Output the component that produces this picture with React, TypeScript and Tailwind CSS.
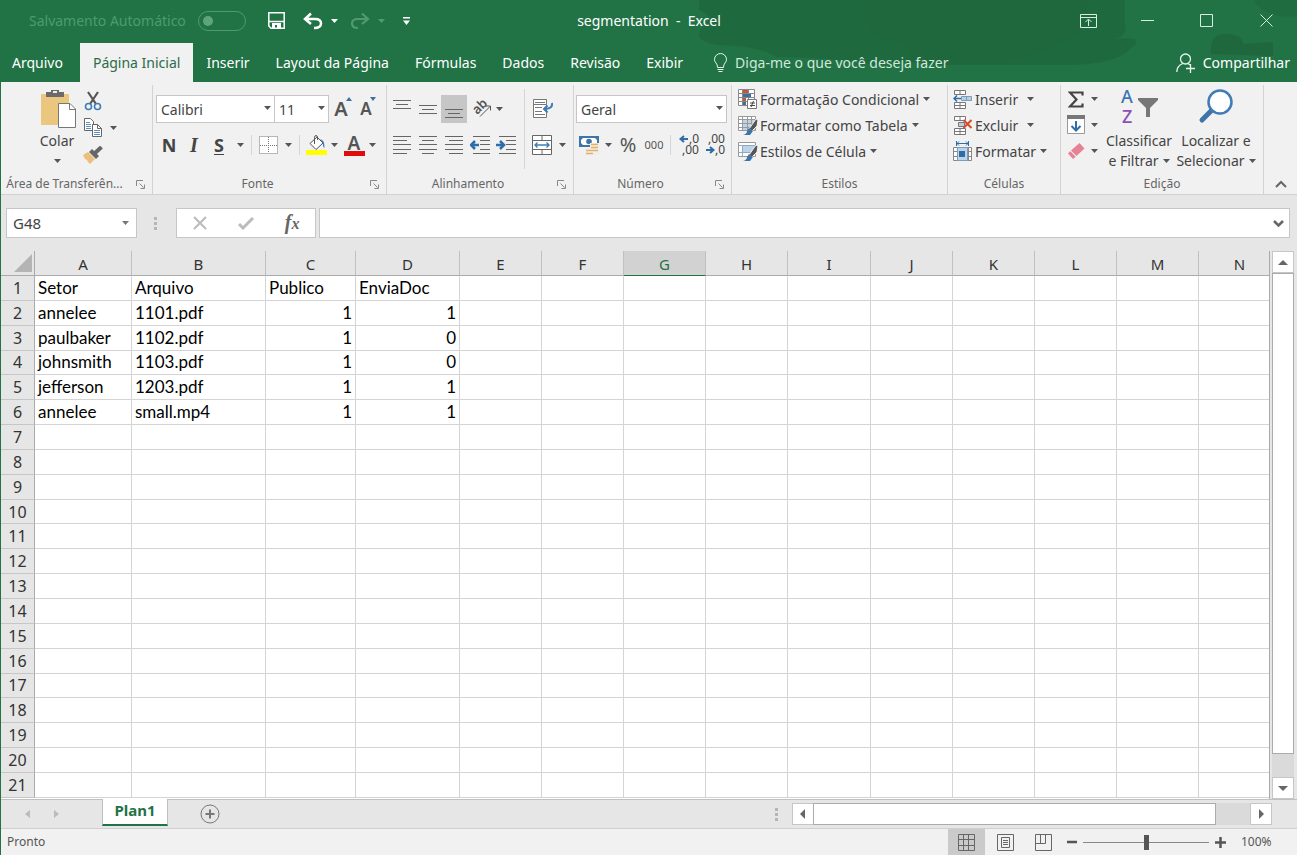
import React, { useState } from "react";
import clsx from "clsx";

interface IconProps {
  className?: string;
}

const COLUMNS = [
  { name: "A", width: 97 },
  { name: "B", width: 134 },
  { name: "C", width: 90 },
  { name: "D", width: 104 },
  { name: "E", width: 82 },
  { name: "F", width: 82 },
  { name: "G", width: 82 },
  { name: "H", width: 82 },
  { name: "I", width: 83 },
  { name: "J", width: 82 },
  { name: "K", width: 82 },
  { name: "L", width: 82 },
  { name: "M", width: 82 },
  { name: "N", width: 82 },
];

const DATA: (string | number)[][] = [
  ["Setor", "Arquivo", "Publico", "EnviaDoc"],
  ["annelee", "1101.pdf", 1, 1],
  ["paulbaker", "1102.pdf", 1, 0],
  ["johnsmith", "1103.pdf", 1, 0],
  ["jefferson", "1203.pdf", 1, 1],
  ["annelee", "small.mp4", 1, 1],
];

const ROW_COUNT = 21;
const ACTIVE_COLUMN = "G";

const TABS = [
  "Arquivo",
  "Página Inicial",
  "Inserir",
  "Layout da Página",
  "Fórmulas",
  "Dados",
  "Revisão",
  "Exibir",
];

/* ---------- small shared pieces ---------- */

const Caret = ({ className = "text-[#555]" }: IconProps) => (
  <svg viewBox="0 0 7 4" className={clsx("h-1 w-[7px] shrink-0", className)} fill="currentColor">
    <path d="M0 0h7L3.500 4z" />
  </svg>
);

const CaretButton = ({ label, className }: { label: string; className?: string }) => (
  <button
    aria-label={label}
    className={clsx("flex h-6 w-4 shrink-0 items-center justify-center", className)}
  >
    <Caret />
  </button>
);

const Divider = ({ className }: IconProps) => (
  <div className={clsx("w-px shrink-0 bg-[#d5d5d5]", className)} />
);

interface IconButtonProps {
  label: string;
  className?: string;
  children: React.ReactNode;
}

const IconButton = ({ label, className = "h-7 w-6", children }: IconButtonProps) => (
  <button
    aria-label={label}
    className={clsx("flex shrink-0 items-center justify-center", className)}
  >
    {children}
  </button>
);

interface GroupProps {
  title: string;
  launcher?: boolean;
  className: string;
  children: React.ReactNode;
}

const Group = ({ title, launcher, className, children }: GroupProps) => (
  <section
    aria-label={title}
    className={clsx("relative flex shrink-0 flex-col border-r border-[#d2d2d2]", className)}
  >
    <div className="flex h-[89px]">{children}</div>
    <div className="flex h-5 items-center text-[12px] text-[#666]">
      <span className="flex-1 truncate text-center">{title}</span>
      {launcher && (
        <button aria-label={`Opções de ${title}`} className="flex w-6 justify-center">
          <svg viewBox="0 0 9 9" className="size-[9px]" fill="none" stroke="#888">
            <path d="M.5 6V.5H7M3.500 3.500l4 4M8.500 4.500v4h-4" />
          </svg>
        </button>
      )}
    </div>
  </section>
);

interface PickerProps {
  label: string;
  value: string;
  className: string;
}

const Picker = ({ label, value, className }: PickerProps) => (
  <div className={clsx("relative h-7 shrink-0", className)}>
    <select
      aria-label={label}
      defaultValue={value}
      className="size-full appearance-none border border-[#c6c6c6] bg-white pl-1 text-[14px] text-[#444] outline-none"
    >
      <option>{value}</option>
    </select>
    <Caret className="pointer-events-none absolute top-[11px] right-1 text-[#555]" />
  </div>
);

/* ---------- ribbon icons ---------- */

const PasteIcon = () => (
  <svg viewBox="0 0 36 40" className="h-10 w-9">
    <path fill="#ebc67f" d="M0 5h28v31H0z" />
    <path fill="#6b6b6b" d="M5 3h5V1h8v2h5v5H5z" />
    <path fill="#efefef" d="M12 2h4v2h-4z" />
    <path fill="#fff" stroke="#777" d="M17.500 14.500H29l5.500 5.500v18.500h-17z" />
    <path fill="none" stroke="#777" d="M28.500 14.500v6h6" />
  </svg>
);

const CutIcon = () => (
  <svg viewBox="0 0 18 20" className="h-5 w-[18px]" fill="none">
    <path stroke="#555" strokeWidth="2.200" d="M4 1l8 12M14 1L6 13" />
    <circle cx="4.500" cy="15.500" r="3" stroke="#3f7cb5" strokeWidth="1.600" />
    <circle cx="13.500" cy="15.500" r="3" stroke="#3f7cb5" strokeWidth="1.600" />
  </svg>
);

const CopyIcon = () => (
  <svg viewBox="0 0 18 19" className="h-[19px] w-[18px]" fill="#fff" stroke="#666">
    <path d="M.5.5h6l3 3v9h-9z" />
    <path stroke="#5b8fbf" d="M2 4.500h4M2 6.500h5M2 8.500h5M2 10.500h5" />
    <path d="M8.500 6.500h5l4 4v8h-9z" />
    <path d="M13.500 6.500v4h4" fill="none" />
    <path stroke="#5b8fbf" d="M10 12.500h6M10 14.500h6M10 16.500h6" />
  </svg>
);

const BrushIcon = () => (
  <svg viewBox="0 0 20 18" className="h-[18px] w-5">
    <path fill="#ecbf7c" d="M0 9l5-3 7 7-5 5-2-2-1-2-2-1z" />
    <path fill="#666" d="M6 6l3-3 7 7-3 3z" />
    <path stroke="#666" strokeWidth="4" d="M12 7l6.500-6" />
  </svg>
);

const GrowFontIcon = ({ down }: { down?: boolean }) => (
  <span className="relative flex items-end text-[#555]">
    <span className={clsx("leading-6 font-semibold", down ? "text-[17px]" : "text-[20px]")}>A</span>
    <svg viewBox="0 0 6 4" className="absolute top-0 -right-1 h-1 w-1.5" fill="#3f6f9f">
      <path d={down ? "M0 0h6L3 4z" : "M0 4h6L3 0z"} />
    </svg>
  </span>
);

const BordersIcon = () => (
  <svg viewBox="0 0 19 19" className="size-[19px]" fill="none" stroke="#777">
    <path fill="#fff" strokeDasharray="1 1" d="M.5.5h18v17H.5z" />
    <path strokeDasharray="1 1" d="M9.500 1v16M1 9.500h17" />
  </svg>
);

const FillIcon = () => (
  <svg viewBox="0 0 21 20" className="h-5 w-[21px]">
    <path fill="#ff0" d="M0 15h21v5H0z" />
    <path fill="#fff" stroke="#555" d="M4 8.500L11 2l6 6-7 6.500z" />
    <path fill="none" stroke="#555" d="M8.500 9V2.500q0-2 1.500-2t1.500 2V5" />
    <path fill="#3f7cb5" d="M14 4q5 1 4.500 9-2-1-1.500-5z" />
  </svg>
);

const FontColorIcon = () => (
  <span className="flex flex-col items-center">
    <span className="text-[19px] leading-4 font-semibold text-[#555]">A</span>
    <span className="h-[5px] w-[21px] bg-[#e00b0b]" />
  </span>
);

// one path per alignment, all drawn on the same 18x20 box
const LINES = {
  top: "M0 1.500h18M3 5.500h12M0 9.500h18",
  middle: "M0 6.500h18M3 10.500h12M0 14.500h18",
  bottom: "M0 10.500h18M3 14.500h12M0 18.500h18",
  left: "M0 1.500h18M0 5.500h14M0 9.500h18M0 14.500h18M0 18.500h14",
  center: "M0 1.500h18M3 5.500h12M0 9.500h18M0 14.500h18M3 18.500h12",
  right: "M0 1.500h18M4 5.500h14M0 9.500h18M0 14.500h18M4 18.500h14",
};

const LinesIcon = ({ kind }: { kind: keyof typeof LINES }) => (
  <svg viewBox="0 0 18 20" className="h-5 w-[18px]" fill="none" stroke="#666">
    <path d={LINES[kind]} />
  </svg>
);

const IndentIcon = ({ increase }: { increase?: boolean }) => (
  <svg viewBox="0 0 20 20" className="size-5" fill="none">
    <path stroke="#666" d="M3 1.500h17M10 5.500h10M10 9.500h10M10 14.500h10M3 18.500h17" />
    <path
      stroke="#2f6da8"
      strokeWidth="2.500"
      d={increase ? "M0 10h7M4 6l4 4-4 4" : "M9 10H2M5 6l-4 4 4 4"}
    />
  </svg>
);

const OrientationIcon = () => (
  <svg viewBox="0 0 20 20" className="size-5 overflow-visible">
    <text x="0" y="12" fontSize="13" fontWeight="600" fill="#555" transform="rotate(-45 7 9)">
      ab
    </text>
    <path fill="none" stroke="#555" d="M7 17.500L17 7.500M13 7h4.500v4.500" />
  </svg>
);

const WrapIcon = () => (
  <svg viewBox="0 0 21 20" className="h-5 w-[21px]" fill="none">
    <path fill="#fff" stroke="#777" d="M1.500.5h13v5h-13zM1.500 5.500h13v13h-13z" />
    <path stroke="#777" d="M3 3.500h10M3 8.500h7M3 12.500h7M3 15.500h10" />
    <path stroke="#3f7cb5" strokeWidth="2" d="M20 4q1 6-8 6M15.500 6.500L12 10l3.500 3.500" />
  </svg>
);

const MergeIcon = () => (
  <svg viewBox="0 0 21 20" className="h-5 w-[21px]" fill="#fff">
    <path stroke="#666" d="M.5.5h19v19H.5zM.5 5.500h19M.5 14.500h19M10 .5v5M10 14.500v5" />
    <path
      fill="none"
      stroke="#3f7cb5"
      strokeWidth="1.400"
      d="M3 10h14M5.500 7.500L3 10l2.500 2.500M14.500 7.500L17 10l-2.500 2.500"
    />
  </svg>
);

const MoneyIcon = () => (
  <svg viewBox="0 0 21 20" className="h-5 w-[21px]">
    <path fill="#3f74a8" d="M0 1h20v11H0z" />
    <path fill="#fff" d="M4 3h12l2 2v3l-2 2H4L2 8V5z" />
    <circle cx="10" cy="6.500" r="2.800" fill="#3f74a8" />
    <path fill="#efefef" d="M11 8h10v12H6v-7h5z" />
    <path
      stroke="#e5b061"
      strokeWidth="1.600"
      d="M12 9.500h7M12 12.500h7M12 15.500h7M7 15.500h5M7 18.500h7"
    />
  </svg>
);

const DecimalIcon = ({ decrease }: { decrease?: boolean }) => (
  <svg viewBox="0 0 20 22" className="h-[22px] w-5 overflow-visible text-[12px]" fill="#444">
    <text x={decrease ? 2 : 9} y="9">
      {decrease ? ",00" : ",0"}
    </text>
    <text x={decrease ? 9 : 2} y="20">
      {decrease ? ",0" : ",00"}
    </text>
    <path
      fill="none"
      stroke="#2f6da8"
      strokeWidth="2"
      d={decrease ? "M0 16h7M4 13l3.500 3L4 19" : "M8 5H1M4 2L.5 5 4 8"}
    />
  </svg>
);

const ConditionalIcon = () => (
  <svg viewBox="0 0 20 20" className="size-5">
    <path
      fill="#fff"
      stroke="#888"
      d="M.5.5h16v16H.5zM4.500.5v16M10.500.5v16M.5 4.500h16M.5 8.500h16M.5 12.500h16"
    />
    <path fill="#c5533f" d="M5 1h5v3H5zM5 9h3v3H5z" />
    <path fill="#3f6f9f" d="M5 5h8v3H5zM5 13h3v3H5z" />
    <path fill="#fff" stroke="#777" d="M9.500 10.500h9v9h-9z" />
    <path stroke="#444" d="M12 14h5M12 16.500h5M15.500 12l-2.500 6" />
  </svg>
);

const TableBrushIcon = ({ cell }: { cell?: boolean }) => (
  <svg viewBox="0 0 20 20" className="size-5">
    <path fill="#fff" stroke="#999" d="M.5 1.500h17v14H.5z" />
    {cell ? (
      <path
        fill="#bcd3ea"
        stroke="#8fa9c0"
        d="M4.500 4.500h13v7h-13zM.5 4.500h4M.5 11.500h4M4.500 11.500v4"
      />
    ) : (
      <>
        <path fill="#bcd3ea" d="M5 5h12v10H5z" />
        <path
          fill="none"
          stroke="#999"
          d="M.5 4.500h17M.5 8.500h17M.5 12.500h17M4.500 1.500v14M9.500 1.500v14M13.500 1.500v14"
        />
      </>
    )}
    <path stroke="#f1f1f1" fill="#555" d="M18 4l2 1-1 6-5 5-3-2z" />
    <path fill="#3f74a8" d="M11 13l4 3-3 4H5q4-1 4-4z" />
  </svg>
);

const InsertIcon = () => (
  <svg viewBox="0 0 20 19" className="h-[19px] w-5">
    <path
      fill="#fff"
      stroke="#777"
      d="M1.500.5h11v4h-11zM1.500 12.500h11v6h-11zM7 .5v4M7 12.500v6M1.500 15.500h11"
    />
    <path fill="#b9cfe4" stroke="#7d9cb8" d="M8.500 6.500h10v4h-10zM13.500 6.500v4" />
    <path fill="none" stroke="#2f6da8" strokeWidth="1.500" d="M8 8.500H1M4 5.500l-3 3 3 3" />
  </svg>
);

const DeleteIcon = () => (
  <svg viewBox="0 0 20 19" className="h-[19px] w-5">
    <path
      fill="#fff"
      stroke="#777"
      d="M1.500.5h11v4h-11zM1.500 12.500h11v6h-11zM7 .5v4M7 12.500v6M1.500 15.500h11"
    />
    <path fill="#b9cfe4" stroke="#777" d="M5.500 6.500h6v4h-6z" />
    <path fill="none" stroke="#d8492c" strokeWidth="2" d="M10.500 4l8 8M18.500 4l-8 8" />
  </svg>
);

const FormatIcon = () => (
  <svg viewBox="0 0 20 20" className="size-5">
    <path fill="none" stroke="#2f6da8" d="M3.500 0v5M15.500 0v5M4 2.500h11M6 .5l-2 2 2 2M13 .5l2 2-2 2" />
    <path
      fill="#fff"
      stroke="#888"
      d="M.5 6.500h18v13H.5zM.5 10.500h18M.5 15.500h18M4.500 6.500v13M15.500 6.500v13"
    />
    <path fill="#bcd3ea" stroke="#7d9cb8" d="M4.500 6.500h10v13h-10z" />
    <path fill="#2f6da8" d="M6 10h6v6H6z" />
  </svg>
);

const SigmaIcon = () => (
  <svg viewBox="0 0 16 17" className="h-[17px] w-4" fill="none" stroke="#444" strokeWidth="2.200">
    <path d="M14.500 4.500V1.500H2l6.500 7L2 15.500h12.500v-3" />
  </svg>
);

const FillDownIcon = () => (
  <svg viewBox="0 0 18 20" className="h-5 w-[18px]">
    <path fill="#fff" stroke="#999" d="M.5.5h17v18H.5z" />
    <path fill="#777" d="M0 0h18v4H0z" />
    <path fill="none" stroke="#2f6da8" strokeWidth="2" d="M9 6v9M4.500 11L9 15.500l4.500-4.500" />
  </svg>
);

const EraserIcon = () => (
  <svg viewBox="0 0 18 18" className="size-[18px]">
    <path fill="#e58395" d="M12.500 1l5 5.500L9.500 14 4 8.500z" />
    <path fill="#e58395" d="M3.300 9.300l5.400 5.400L6 17 1 11.500z" />
  </svg>
);

const SortFilterIcon = () => (
  <svg viewBox="0 0 37 36" className="h-9 w-[37px] overflow-visible text-[18px] font-medium">
    <text x="0" y="14" fill="#3f74b5">
      A
    </text>
    <text x="1" y="34" fill="#8d4fb5">
      Z
    </text>
    <path fill="#777" d="M17 9h20v2l-8 8v9h-4v-9l-8-8z" />
  </svg>
);

const FindIcon = () => (
  <svg viewBox="0 0 36 36" className="size-9" fill="none">
    <path stroke="#3f74a8" strokeWidth="5" strokeLinecap="round" d="M4 31L13 22" />
    <circle cx="22" cy="13" r="11.500" fill="#fff" stroke="#3f7cb5" strokeWidth="2.500" />
  </svg>
);

/* ---------- title bar and tabs ---------- */

const HeaderPattern = () => (
  <svg
    viewBox="0 0 620 82"
    preserveAspectRatio="xMaxYMin slice"
    className="pointer-events-none absolute top-0 right-0 h-full w-[620px]"
    fill="#1f653c"
  >
    <path
      d="M22 0h426v24q4 14-16 16 40-6 22 8-14 16-60 17H260q-30-8-60 0-50-8-100-8-20-12-60-12-30-6-10-22 5-8-8-13z"
      opacity=".75"
    />
    <path d="M190 0h220v25q-40 30-90 38h-90q10-15-12-22-40-8-28-41z" opacity=".6" />
    <path d="M534 54q-2-20 15-20t17 10l30-2v14z" opacity=".8" />
    <path d="M576 0h44v16q-30 4-44-16z" opacity=".5" />
  </svg>
);

const TitleBar = () => (
  <div className="relative flex h-[41px] items-center text-white">
    <div className="flex flex-1 items-center text-[#4f9a6e]">
      <label className="ml-7 flex items-center gap-3 text-[14px] whitespace-nowrap">
        Salvamento Automático
        <input
          type="checkbox"
          className="relative h-5 w-12 appearance-none rounded-full border border-[#4f9a6e] before:absolute before:top-1 before:left-1 before:size-[10px] before:rounded-full before:bg-[#5fa57c]"
        />
      </label>
      <button aria-label="Salvar" className="ml-[22px] flex">
        <svg viewBox="0 0 17 17" className="size-[17px]" fill="none" stroke="#fff" strokeWidth="1.500">
          <path d="M.8.800h15.400v15.400H3L.8 14z" />
          <path d="M1 9.500h15" />
          <path fill="#fff" stroke="none" d="M4 11h9v6H9v-4H7v4H4z" />
        </svg>
      </button>
      <button aria-label="Desfazer" className="ml-[18px] flex">
        <svg viewBox="0 0 20 18" className="h-[18px] w-5" fill="none" stroke="#fff" strokeWidth="2.500">
          <path d="M2 7h10q6 0 6 4.500T11 16M8 1.500L2 7l6 5" />
        </svg>
      </button>
      <button aria-label="Opções de desfazer" className="ml-2 flex">
        <Caret className="text-white" />
      </button>
      <button aria-label="Refazer" className="ml-3 flex">
        <svg viewBox="0 0 20 18" className="h-[18px] w-5" fill="none" stroke="#4f9a6e" strokeWidth="2.200">
          <path d="M18 7H8q-6 0-6 4.500T8 16M12 1.500L18 7l-6 5" />
        </svg>
      </button>
      <button aria-label="Opções de refazer" className="ml-2 flex">
        <Caret className="text-[#4f9a6e]" />
      </button>
      <button aria-label="Personalizar acesso rápido" className="ml-[18px] flex">
        <svg viewBox="0 0 7 8" className="h-2 w-[7px]" fill="#fff">
          <path d="M0 0h7v1.500H0zM0 3.500h7L3.500 8z" />
        </svg>
      </button>
    </div>
    <h1 className="text-[14px] whitespace-pre">segmentation  -  Excel</h1>
    <div className="flex flex-1 justify-end">
      <button aria-label="Opções de exibição da faixa" className="flex w-[59px] justify-center">
        <svg viewBox="0 0 17 14" className="h-3.5 w-[17px]" fill="none" stroke="#d5f0e0">
          <path d="M.5.5h16v13H.5zM.5 3.500h16M8.500 12V5.500M5.500 8l3-3 3 3" />
        </svg>
      </button>
      <button aria-label="Minimizar" className="flex w-[59px] items-center justify-center">
        <svg viewBox="0 0 13 13" className="size-[13px]" stroke="#d5f0e0">
          <path d="M0 6.500h13" />
        </svg>
      </button>
      <button aria-label="Maximizar" className="flex w-[59px] items-center justify-center">
        <svg viewBox="0 0 13 13" className="size-[13px]" fill="none" stroke="#d5f0e0">
          <path d="M.5.5h12v12H.5z" />
        </svg>
      </button>
      <button aria-label="Fechar" className="flex w-[61px] items-center justify-center">
        <svg viewBox="0 0 13 13" className="size-[13px]" stroke="#d5f0e0">
          <path d="M.5.5l12 12M12.500.5l-12 12" />
        </svg>
      </button>
    </div>
  </div>
);

const RibbonTabs = () => {
  const [active, setActive] = useState("Página Inicial");
  return (
    <nav className="relative mt-0.5 flex h-[39px] items-stretch pr-[7px] text-[14px] whitespace-nowrap text-white">
      {TABS.map((tab) => (
        <button
          key={tab}
          onClick={() => setActive(tab)}
          className={clsx(
            "px-[13px] first:pr-[17px] first:pl-[11px]",
            tab === active && "bg-[#f1f1f1] text-[#2c6b48]",
          )}
        >
          {tab}
        </button>
      ))}
      <button className="ml-[18px] flex items-center gap-2 text-[#cfe8da]">
        <svg viewBox="0 0 13 20" className="h-5 w-[13px]" fill="none" stroke="#e6f5ec">
          <path d="M3.500 14.500q0-3-1.500-4.500T.5 6.500a6 6 0 0112 0q0 2-1.500 3.500t-1.500 4.500zM3.500 16.500h6M4.500 18.500h4" />
        </svg>
        Diga-me o que você deseja fazer
      </button>
      <button className="ml-auto flex items-center gap-2">
        <svg viewBox="0 0 19 20" className="h-5 w-[19px]" fill="none" stroke="#e6f5ec" strokeWidth="1.300">
          <circle cx="9.500" cy="6" r="5" />
          <path d="M.8 19q0-6 6-8.500M12 10.500l2 1.500M10 15.500h9M14.500 11v9" />
        </svg>
        Compartilhar
      </button>
    </nav>
  );
};

/* ---------- ribbon ---------- */

interface MenuButtonProps {
  icon: React.ReactNode;
  text: string;
  className?: string;
}

const MenuButton = ({ icon, text, className }: MenuButtonProps) => (
  <button className="flex h-[26px] items-center gap-0.5 text-[14px] whitespace-nowrap text-[#444]">
    {icon}
    <span className={className}>{text}</span>
    <Caret className="ml-0.5 text-[#555]" />
  </button>
);

const Ribbon = () => (
  <div className="flex h-[113px] shrink-0 border-b border-[#d2d2d2] bg-[#f1f1f1] pt-[3px]">
    <Group title="Área de Transferên..." launcher className="w-[152px]">
      <button className="ml-9 flex w-10 flex-col items-center pt-1 text-[14px] text-[#444]">
        <span className="flex w-10 justify-end">
          <PasteIcon />
        </span>
        <span className="leading-6">Colar</span>
        <Caret className="mt-1.5 text-[#555]" />
      </button>
      <div className="ml-1.5 flex flex-col pt-0.5">
        <IconButton label="Recortar" className="h-[27px] w-5">
          <CutIcon />
        </IconButton>
        <div className="flex items-center">
          <IconButton label="Copiar" className="h-[27px] w-5">
            <CopyIcon />
          </IconButton>
          <CaretButton label="Opções de cópia" className="ml-0.5" />
        </div>
        <IconButton label="Pincel de formatação" className="h-[27px] w-5">
          <BrushIcon />
        </IconButton>
      </div>
    </Group>

    <Group title="Fonte" launcher className="w-[234px]">
      <div className="flex flex-col gap-2 pt-2.5 pl-[3px]">
        <div className="flex">
          <Picker label="Fonte" value="Calibri" className="w-[119px]" />
          <Picker label="Tamanho da fonte" value="11" className="-ml-px w-[55px]" />
          <IconButton label="Aumentar fonte" className="h-7 w-6">
            <GrowFontIcon />
          </IconButton>
          <IconButton label="Diminuir fonte" className="h-7 w-[26px]">
            <GrowFontIcon down />
          </IconButton>
        </div>
        <div className="flex items-center text-[18px] text-[#444]">
          <IconButton label="Negrito" className="h-7 w-[26px] font-bold">
            N
          </IconButton>
          <IconButton label="Itálico" className="h-7 w-6 font-['Liberation_Serif'] text-[20px] font-bold italic">
            I
          </IconButton>
          <IconButton label="Sublinhado" className="h-7 w-[26px] font-bold underline underline-offset-2">
            S
          </IconButton>
          <CaretButton label="Opções de sublinhado" />
          <Divider className="ml-[3px] h-5" />
          <IconButton label="Bordas" className="ml-1 h-7 w-6">
            <BordersIcon />
          </IconButton>
          <CaretButton label="Opções de bordas" />
          <Divider className="ml-[3px] h-5" />
          <IconButton label="Cor de preenchimento" className="ml-1 h-7 w-6">
            <FillIcon />
          </IconButton>
          <CaretButton label="Opções de preenchimento" className="-ml-0.5" />
          <IconButton label="Cor da fonte" className="h-7 w-6">
            <FontColorIcon />
          </IconButton>
          <CaretButton label="Opções de cor da fonte" className="-ml-0.5" />
        </div>
      </div>
    </Group>

    <Group title="Alinhamento" launcher className="w-[187px]">
      <div className="flex w-[137px] flex-col gap-2 pt-2.5 pl-0.5">
        <div className="flex items-center">
          <IconButton label="Alinhar em cima" className="h-7 w-[26px]">
            <LinesIcon kind="top" />
          </IconButton>
          <IconButton label="Alinhar no meio" className="h-7 w-[26px]">
            <LinesIcon kind="middle" />
          </IconButton>
          <IconButton label="Alinhar embaixo" className="h-7 w-[26px] bg-[#c6c6c6]">
            <LinesIcon kind="bottom" />
          </IconButton>
          <IconButton label="Orientação" className="ml-1 h-7 w-6">
            <OrientationIcon />
          </IconButton>
          <CaretButton label="Opções de orientação" className="-ml-1" />
        </div>
        <div className="flex items-center">
          <IconButton label="Alinhar à esquerda" className="h-7 w-[26px]">
            <LinesIcon kind="left" />
          </IconButton>
          <IconButton label="Centralizar" className="h-7 w-[26px]">
            <LinesIcon kind="center" />
          </IconButton>
          <IconButton label="Alinhar à direita" className="h-7 w-[26px]">
            <LinesIcon kind="right" />
          </IconButton>
          <IconButton label="Diminuir recuo" className="h-7 w-[26px]">
            <IndentIcon />
          </IconButton>
          <IconButton label="Aumentar recuo" className="h-7 w-[26px]">
            <IndentIcon increase />
          </IconButton>
        </div>
      </div>
      <Divider className="mt-1 h-20" />
      <div className="flex flex-col gap-2 pt-2.5 pl-[5px]">
        <IconButton label="Quebrar texto">
          <WrapIcon />
        </IconButton>
        <div className="flex items-center">
          <IconButton label="Mesclar e centralizar">
            <MergeIcon />
          </IconButton>
          <CaretButton label="Opções de mesclagem" />
        </div>
      </div>
    </Group>

    <Group title="Número" launcher className="w-[158px]">
      <div className="flex flex-col gap-2 pt-2.5 pl-0.5">
        <Picker label="Formato de número" value="Geral" className="w-[151px]" />
        <div className="flex items-center text-[#555]">
          <IconButton label="Formato de contabilização" className="h-7 w-[26px]">
            <MoneyIcon />
          </IconButton>
          <CaretButton label="Opções de contabilização" className="-ml-0.5" />
          <IconButton label="Porcentagem" className="h-7 w-6 text-[20px]">
            %
          </IconButton>
          <IconButton label="Separador de milhares" className="h-7 w-7 text-[11px]">
            000
          </IconButton>
          <Divider className="ml-0.5 h-5" />
          <IconButton label="Aumentar casas decimais" className="ml-1.5 h-7 w-[26px]">
            <DecimalIcon />
          </IconButton>
          <IconButton label="Diminuir casas decimais" className="h-7 w-[26px]">
            <DecimalIcon decrease />
          </IconButton>
        </div>
      </div>
    </Group>

    <Group title="Estilos" className="w-[216px]">
      <div className="flex flex-col pt-px pl-1.5">
        <MenuButton icon={<ConditionalIcon />} text="Formatação Condicional" />
        <MenuButton icon={<TableBrushIcon />} text="Formatar como Tabela" />
        <MenuButton icon={<TableBrushIcon cell />} text="Estilos de Célula" />
      </div>
    </Group>

    <Group title="Células" className="w-[113px]">
      <div className="flex flex-col pt-px pl-[5px]">
        <MenuButton icon={<InsertIcon />} text="Inserir" className="w-12 text-left" />
        <MenuButton icon={<DeleteIcon />} text="Excluir" className="w-12 text-left" />
        <MenuButton icon={<FormatIcon />} text="Formatar" />
      </div>
    </Group>

    <Group title="Edição" className="w-[203px]">
      <div className="flex flex-col pt-px pl-[3px]">
        <div className="flex h-[26px] items-center">
          <IconButton label="Soma">
            <SigmaIcon />
          </IconButton>
          <CaretButton label="Opções de soma" className="-ml-0.5" />
        </div>
        <div className="flex h-[26px] items-center">
          <IconButton label="Preencher">
            <FillDownIcon />
          </IconButton>
          <CaretButton label="Opções de preencher" className="-ml-0.5" />
        </div>
        <div className="flex h-[26px] items-center">
          <IconButton label="Limpar">
            <EraserIcon />
          </IconButton>
          <CaretButton label="Opções de limpar" className="-ml-0.5" />
        </div>
      </div>
      <button className="flex w-[74px] shrink-0 flex-col items-center pt-1 text-[14px] leading-5 whitespace-nowrap text-[#444]">
        <SortFilterIcon />
        <span className="mt-1.5">Classificar</span>
        <span className="flex items-center gap-1">
          e Filtrar <Caret />
        </span>
      </button>
      <button className="flex w-20 shrink-0 flex-col items-center pt-1 text-[14px] leading-5 whitespace-nowrap text-[#444]">
        <FindIcon />
        <span className="mt-1.5">Localizar e</span>
        <span className="flex items-center gap-1">
          Selecionar <Caret />
        </span>
      </button>
    </Group>
    <button aria-label="Recolher a faixa de opções" className="mt-auto mr-2.5 mb-1.5 ml-auto flex">
      <svg viewBox="0 0 12 8" className="h-2 w-3" fill="none" stroke="#666" strokeWidth="2">
        <path d="M1 7l5-5 5 5" />
      </svg>
    </button>
  </div>
);

/* ---------- formula bar ---------- */

const Dots = ({ className }: IconProps) => (
  <svg viewBox="0 0 3 13" className={clsx("h-[13px] w-[3px] shrink-0", className)} fill="#b5b5b5">
    <path d="M0 0h3v3H0zM0 5h3v3H0zM0 10h3v3H0z" />
  </svg>
);

const FormulaBar = () => (
  <div className="flex h-14 shrink-0 items-center bg-[#e6e6e6] pr-[7px] pl-[5px]">
    <div className="relative h-[30px] w-[131px] shrink-0">
      <input
        aria-label="Caixa de nome"
        defaultValue="G48"
        className="size-full border border-[#c6c6c6] bg-white pl-1.5 text-[15px] text-[#444] outline-none"
      />
      <Caret className="pointer-events-none absolute top-[13px] right-2 text-[#777]" />
    </div>
    <Dots className="ml-[17px]" />
    <div className="ml-[19px] flex h-[30px] w-[140px] shrink-0 items-center justify-around border border-[#c6c6c6] bg-white">
      <button aria-label="Cancelar">
        <svg viewBox="0 0 14 14" className="size-3.5" stroke="#bbb" strokeWidth="2">
          <path d="M1 1l12 12M13 1L1 13" />
        </svg>
      </button>
      <button aria-label="Inserir">
        <svg viewBox="0 0 16 13" className="h-[13px] w-4" fill="none" stroke="#bbb" strokeWidth="3">
          <path d="M1 7l4 4L15 1" />
        </svg>
      </button>
      <button
        aria-label="Inserir função"
        className="font-['Liberation_Serif'] text-[20px] leading-6 font-bold text-[#666] italic"
      >
        f<span className="text-[16px]">x</span>
      </button>
    </div>
    <div className="relative ml-[3px] h-[30px] flex-1">
      <input
        aria-label="Barra de fórmulas"
        className="size-full border border-[#c6c6c6] bg-white px-2 text-[15px] outline-none"
      />
      <svg
        viewBox="0 0 11 8"
        className="pointer-events-none absolute top-3 right-1.5 h-2 w-[11px]"
        fill="none"
        stroke="#666"
        strokeWidth="2.500"
      >
        <path d="M1 1l4.500 4.500L10 1" />
      </svg>
    </div>
  </div>
);

/* ---------- sheet ---------- */

const Sheet = () => (
  <div className="min-w-0 flex-1 overflow-hidden border-r border-[#ababab] bg-white">
    <table className="h-[calc(100%-1px)] w-[1280px] min-w-full table-fixed border-separate border-spacing-0">
      <colgroup>
        <col style={{ width: 34 }} />
        {COLUMNS.map((column) => (
          <col key={column.name} style={{ width: column.width }} />
        ))}
      </colgroup>
      <thead>
        <tr className="h-[25px] text-[15px] leading-5 text-[#333]">
          <th className="border-r border-b border-[#ababab] bg-[#e6e6e6] p-0">
            <svg viewBox="0 0 18 18" className="mr-0.5 ml-auto size-[18px]" fill="#b4b4b4">
              <path d="M18 0v18H0z" />
            </svg>
          </th>
          {COLUMNS.map(({ name }) => (
            <th
              key={name}
              scope="col"
              className={clsx(
                "border-r border-b p-0 pt-0.5 font-normal",
                name === ACTIVE_COLUMN
                  ? "border-r-[#c0c0c0] border-b-[#217346] bg-[#d2d2d2] text-[#217346]"
                  : "border-r-[#c0c0c0] border-b-[#ababab] bg-[#e6e6e6]",
              )}
            >
              {name}
            </th>
          ))}
        </tr>
      </thead>
      <tbody>
        {Array.from({ length: ROW_COUNT }, (_, row) => (
          <tr key={row} className="leading-5">
            <th
              scope="row"
              className="border-r border-b border-r-[#ababab] border-b-[#c6c6c6] bg-[#e6e6e6] p-0 text-[16px] font-normal text-[#333]"
            >
              {row + 1}
            </th>
            {COLUMNS.map(({ name }, col) => {
              const value = DATA[row]?.[col];
              return (
                <td
                  key={name}
                  className={clsx(
                    "border-r border-b border-[#d4d4d4] px-[3px] py-0 font-['Lato'] text-[17px] text-black",
                    typeof value === "number" && "text-right",
                  )}
                >
                  {value}
                </td>
              );
            })}
          </tr>
        ))}
      </tbody>
    </table>
  </div>
);

const ScrollButton = ({ label, path }: { label: string; path: string }) => (
  <button
    aria-label={label}
    className="flex size-[22px] shrink-0 items-center justify-center border border-[#c6c6c6] bg-white"
  >
    <svg viewBox="0 0 10 10" className="size-2.5" fill="#666">
      <path d={path} />
    </svg>
  </button>
);

const VerticalScroll = () => (
  <div className="mr-[3px] ml-0.5 flex w-[22px] flex-col bg-[#dadada]">
    <ScrollButton label="Rolar para cima" path="M0 8h10L5 3z" />
    <div className="flex-[480] border border-[#ababab] bg-white" />
    <div className="flex-[23]" />
    <ScrollButton label="Rolar para baixo" path="M0 3h10L5 8z" />
  </div>
);

const SheetTabs = () => (
  <div className="flex h-[29px] shrink-0 border-t border-[#c0c0c0] bg-[#e6e6e6]">
    <div className="flex w-[101px] items-center gap-6 pl-6 text-[#bbb]">
      <button aria-label="Planilha anterior">
        <svg viewBox="0 0 5 8" className="h-2 w-[5px]" fill="currentColor">
          <path d="M5 0v8L0 4z" />
        </svg>
      </button>
      <button aria-label="Próxima planilha">
        <svg viewBox="0 0 5 8" className="h-2 w-[5px]" fill="currentColor">
          <path d="M0 0v8l5-4z" />
        </svg>
      </button>
    </div>
    <button className="-mt-px h-[27px] w-[66px] border-x border-b-2 border-x-[#c0c0c0] border-b-[#217346] bg-white pb-1 text-[15px] leading-5 font-bold text-[#217346]">
      Plan1
    </button>
    <button aria-label="Nova planilha" className="ml-8">
      <svg viewBox="0 0 20 20" className="size-5" fill="none" stroke="#777">
        <circle cx="10" cy="10" r="9" />
        <path strokeWidth="2" d="M5.500 10h9M10 5.500v9" />
      </svg>
    </button>
    <div className="ml-auto flex w-[497px] items-center">
      <Dots />
      <div className="ml-3.5 flex flex-1 bg-[#dadada]">
        <ScrollButton label="Rolar para a esquerda" path="M7 0v10L2 5z" />
        <div className="-ml-px flex-[403] border border-[#ababab] bg-white" />
        <div className="flex-[34]" />
        <ScrollButton label="Rolar para a direita" path="M3 0v10l5-5z" />
      </div>
    </div>
    <div className="w-[25px]" />
  </div>
);

/* ---------- status bar ---------- */

const StatusBar = () => (
  <footer className="flex h-[27px] shrink-0 items-center border-t border-[#d0d0d0] bg-[#f1f1f1] pl-1.5 text-[12px] text-[#555]">
    <span>Pronto</span>
    <div className="ml-auto flex h-full">
      <button aria-label="Normal" className="flex w-[37px] items-center justify-center bg-[#cacaca]">
        <svg viewBox="0 0 17 17" className="size-[17px]" fill="none" stroke="#666">
          <path d="M.5.5h16v16H.5zM5.500.5v16M10.500.5v16M.5 5.500h16M.5 11.500h16" />
        </svg>
      </button>
      <button aria-label="Layout da página" className="flex w-10 items-center justify-center">
        <svg viewBox="0 0 17 17" className="size-[17px]" fill="none" stroke="#666">
          <path d="M.5.5h16v16H.5zM4.500 3.500h8v10h-8zM6 6.500h5M6 8.500h5M6 10.500h5" />
        </svg>
      </button>
      <button aria-label="Quebra de página" className="flex w-[37px] items-center justify-center">
        <svg viewBox="0 0 17 17" className="size-[17px]" fill="none" stroke="#666">
          <path d="M.5.5h16v16H.5zM5.500.5v9M10.500.5v9M.5 9.500h10" />
        </svg>
      </button>
    </div>
    <button aria-label="Reduzir" className="ml-[5px]">
      <svg viewBox="0 0 10 10" className="size-2.5" stroke="#555" strokeWidth="2.500">
        <path d="M0 5h10" />
      </svg>
    </button>
    <input
      type="range"
      aria-label="Zoom"
      min={0}
      max={200}
      defaultValue={100}
      className="mx-1.5 h-4 w-[126px] appearance-none bg-transparent [&::-webkit-slider-runnable-track]:h-px [&::-webkit-slider-runnable-track]:bg-[#888] [&::-webkit-slider-thumb]:-mt-[7px] [&::-webkit-slider-thumb]:h-[15px] [&::-webkit-slider-thumb]:w-[5px] [&::-webkit-slider-thumb]:appearance-none [&::-webkit-slider-thumb]:bg-[#555]"
    />
    <button aria-label="Ampliar">
      <svg viewBox="0 0 11 11" className="size-[11px]" stroke="#555" strokeWidth="2.500">
        <path d="M0 5.500h11M5.500 0v11" />
      </svg>
    </button>
    <span className="w-[71px] pl-[15px]">100%</span>
  </footer>
);

export default function App() {
  return (
    <div className="flex h-screen flex-col overflow-hidden border-l border-[#217346] bg-[#e6e6e6] font-['Noto_Sans','Open_Sans',sans-serif]">
      <header className="relative shrink-0 bg-[#217346]">
        <HeaderPattern />
        <TitleBar />
        <RibbonTabs />
      </header>
      <Ribbon />
      <FormulaBar />
      <main className="flex min-h-0 flex-1">
        <Sheet />
        <VerticalScroll />
      </main>
      <SheetTabs />
      <StatusBar />
    </div>
  );
}
